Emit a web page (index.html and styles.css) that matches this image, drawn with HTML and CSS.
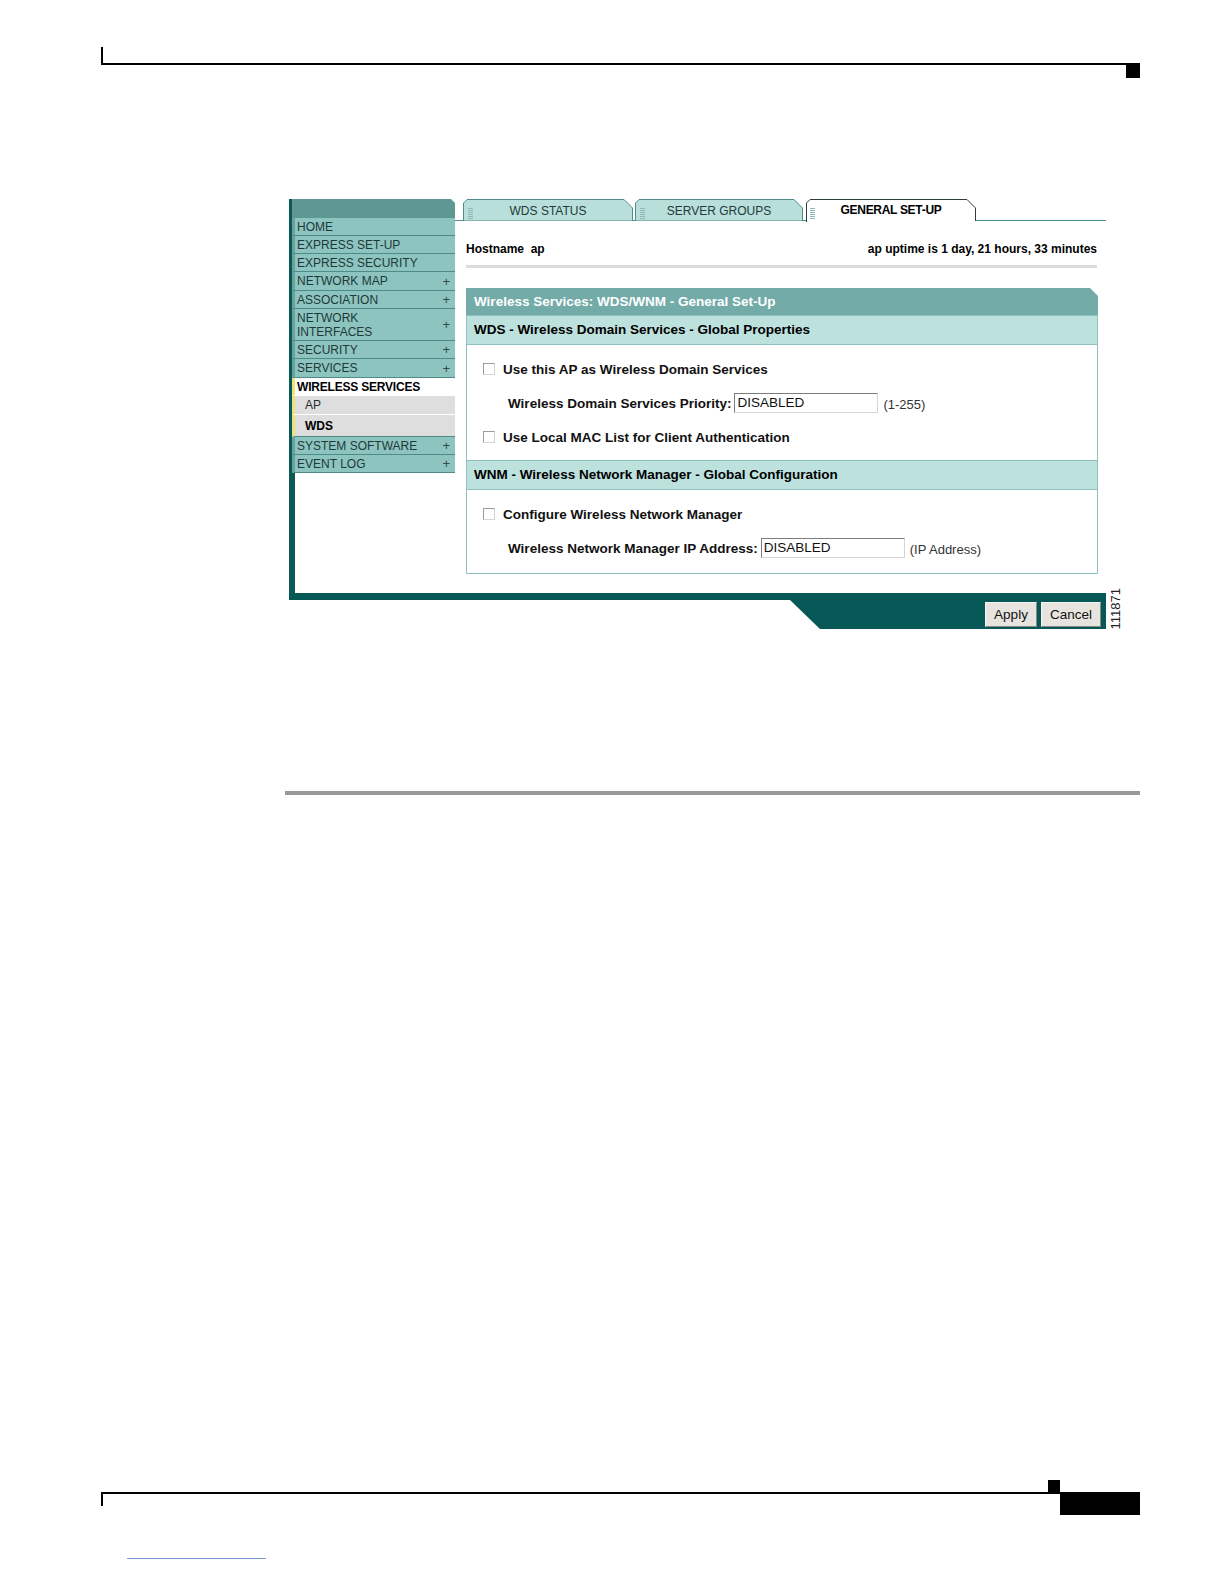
FILE: index.html
```html
<!DOCTYPE html>
<html>
<head>
<meta charset="utf-8">
<link rel="stylesheet" href="styles.css">
</head>
<body>
<div class="page">
  <div class="hdr"></div>
  <div class="hdr-sq"></div>

  <div class="figure">
    <div class="fig-body">
      <div class="fig-main">
        <nav class="nav">
          <div class="nav-head"></div>
          <div class="nav-item">HOME</div>
          <div class="nav-item">EXPRESS SET-UP</div>
          <div class="nav-item">EXPRESS SECURITY</div>
          <div class="nav-item tall"><span>NETWORK MAP</span><span class="plus">+</span></div>
          <div class="nav-item"><span>ASSOCIATION</span><span class="plus">+</span></div>
          <div class="nav-item two"><span>NETWORK<br>INTERFACES</span><span class="plus">+</span></div>
          <div class="nav-item"><span>SECURITY</span><span class="plus">+</span></div>
          <div class="nav-item tall"><span>SERVICES</span><span class="plus">+</span></div>
          <div class="nav-item active">WIRELESS SERVICES</div>
          <div class="nav-item sub">AP</div>
          <div class="nav-item sub cur">WDS</div>
          <div class="nav-item"><span>SYSTEM SOFTWARE</span><span class="plus">+</span></div>
          <div class="nav-item"><span>EVENT LOG</span><span class="plus">+</span></div>
          <div class="nav-fill"></div>
        </nav>

        <div class="content">
          <div class="tabs">
            <div class="tab t1">
              <svg class="tab-bg" width="170" height="22" viewBox="0 0 170 22">
                <polygon points="0.5,22 0.5,4 4,0.5 161,0.5 169.5,9 169.5,22" fill="#b9dfdb" stroke="#4f8d88"/>
                <g fill="#8fb8b4"><rect x="5" y="9" width="5" height="1"/><rect x="5" y="11" width="5" height="1"/><rect x="5" y="13" width="5" height="1"/><rect x="5" y="15" width="5" height="1"/><rect x="5" y="17" width="5" height="1"/><rect x="5" y="19" width="5" height="1"/></g>
              </svg>
              <span class="tab-txt">WDS STATUS</span>
            </div>
            <div class="tab t2">
              <svg class="tab-bg" width="168" height="22" viewBox="0 0 168 22">
                <polygon points="0.5,22 0.5,4 4,0.5 159,0.5 167.5,9 167.5,22" fill="#b9dfdb" stroke="#4f8d88"/>
                <g fill="#8fb8b4"><rect x="5" y="9" width="5" height="1"/><rect x="5" y="11" width="5" height="1"/><rect x="5" y="13" width="5" height="1"/><rect x="5" y="15" width="5" height="1"/><rect x="5" y="17" width="5" height="1"/><rect x="5" y="19" width="5" height="1"/></g>
              </svg>
              <span class="tab-txt">SERVER GROUPS</span>
            </div>
            <div class="tab t3">
              <svg class="tab-bg" width="170" height="23" viewBox="0 0 170 23">
                <polygon points="0.5,23 0.5,4 4,0.5 161,0.5 169.5,9 169.5,23" fill="#ffffff" stroke="none"/>
                <polyline points="0.5,23 0.5,4 4,0.5 161,0.5 169.5,9 169.5,22" fill="none" stroke="#2e3e3c"/>
                <g fill="#8fb8b4"><rect x="4" y="9" width="5" height="1"/><rect x="4" y="11" width="5" height="1"/><rect x="4" y="13" width="5" height="1"/><rect x="4" y="15" width="5" height="1"/><rect x="4" y="17" width="5" height="1"/><rect x="4" y="19" width="5" height="1"/></g>
              </svg>
              <span class="tab-txt bold">GENERAL SET-UP</span>
            </div>
          </div>

          <div class="host">
            <span>Hostname&nbsp; ap</span>
            <span>ap uptime is 1 day, 21 hours, 33 minutes</span>
          </div>

          <div class="panel">
            <div class="panel-title">Wireless Services: WDS/WNM - General Set-Up</div>
            <div class="sec-head">WDS - Wireless Domain Services - Global Properties</div>
            <div class="sec-body b1">
              <div class="row"><span class="cb"></span><span class="lbl">Use this AP as Wireless Domain Services</span></div>
              <div class="row field"><span class="lbl">Wireless Domain Services Priority:</span><span class="inp">DISABLED</span><span class="hint">(1-255)</span></div>
              <div class="row"><span class="cb"></span><span class="lbl">Use Local MAC List for Client Authentication</span></div>
            </div>
            <div class="sec-head">WNM - Wireless Network Manager - Global Configuration</div>
            <div class="sec-body b2">
              <div class="row"><span class="cb"></span><span class="lbl">Configure Wireless Network Manager</span></div>
              <div class="row field"><span class="lbl">Wireless Network Manager IP Address:</span><span class="inp">DISABLED</span><span class="hint">(IP Address)</span></div>
            </div>
          </div>
        </div>
      </div>
      <div class="fig-bar"></div>
      <div class="slab">
        <span class="btn">Apply</span>
        <span class="btn">Cancel</span>
      </div>
    </div>
    <div class="fig-id">111871</div>
  </div>

  <div class="rule"></div>

  <div class="ft-sq"></div>
  <div class="ft">
    <div class="ft-line"></div>
    <div class="ft-block"></div>
  </div>
  <div class="link-line"></div>
</div>
</body>
</html>
```

FILE: styles.css
```css
html, body {
  margin: 0;
  padding: 0;
  background: #ffffff;
}

.page {
  width: 1224px;
  height: 1584px;
  font-family: "Liberation Sans", Arial, sans-serif;
  color: #000;
  overflow: hidden;
}

/* page header */
.hdr {
  margin: 47px 0 0 101px;
  width: 1037px;
  height: 16px;
  border-left: 2px solid #000;
  border-bottom: 2px solid #000;
}
.hdr-sq {
  margin-left: 1126px;
  width: 14px;
  height: 13px;
  background: #000;
}

/* figure */
.figure {
  margin: 121px 0 0 289px;
  display: flex;
  align-items: flex-end;
}
.fig-body {
  width: 817px;
}
.fig-main {
  display: flex;
  height: 394px;
}

/* left navigation */
.nav {
  width: 163px;
  display: flex;
  flex-direction: column;
  border-left: 3px solid #0b5957;
}
.nav-head {
  height: 19px;
  background: #5e9893;
  clip-path: polygon(0 0, calc(100% - 4px) 0, 100% 4px, 100% 100%, 0 100%);
}
.nav-item {
  display: flex;
  justify-content: space-between;
  align-items: center;
  height: 17px;
  padding: 0 5px 0 2px;
  background: #8dc4bf;
  border-left: 3px solid #67a49f;
  border-bottom: 1px solid #4d8b86;
  font-size: 12px;
  color: #1d3a39;
  white-space: nowrap;
}
.nav-item.tall {
  height: 18px;
}
.nav-item.two {
  height: 31px;
  line-height: 14px;
}
.nav-item .plus {
  font-size: 13px;
  color: #2d4e4c;
}
.nav-item.active {
  background: #ffffff;
  color: #000;
  font-weight: bold;
  letter-spacing: -0.2px;
  border-left-color: #ede37c;
  border-bottom-color: #ffffff;
}
.nav-item.sub {
  padding-left: 10px;
  background: #dedede;
  color: #1e2e2e;
  border-left-color: #ede37c;
  border-bottom-color: #ffffff;
  height: 18px;
}
.nav-item.sub.cur {
  font-weight: bold;
  color: #000;
  height: 21px;
  border-bottom: 1px solid #4d8b86;
}
.nav-fill {
  flex: 1;
  background: #fff;
  border-left: 3px solid #0b5957;
}

/* content */
.content {
  flex: 1;
  display: flex;
  flex-direction: column;
}
.tabs {
  display: flex;
  align-items: flex-end;
  gap: 2px;
  height: 21px;
  padding-left: 8px;
  border-bottom: 1px solid #4f8d88;
}
.tab {
  position: relative;
  height: 22px;
  margin-bottom: -1px;
  display: flex;
  align-items: center;
  justify-content: center;
}
.t1 { width: 170px; }
.t2 { width: 168px; }
.t3 { width: 170px; height: 23px; margin-left: 1px; margin-bottom: -2px; align-items: flex-start; }
.tab-bg {
  position: absolute;
  left: 0;
  top: 0;
}
.tab-txt {
  position: relative;
  font-size: 12px;
  color: #223a39;
  padding-top: 1px;
}
.t3 .tab-txt { padding-top: 4px; }
.tab-txt.bold {
  font-weight: bold;
  color: #000;
  letter-spacing: -0.3px;
}

.host {
  display: flex;
  justify-content: space-between;
  margin: 21px 9px 0 11px;
  padding-bottom: 9px;
  border-bottom: 3px solid #dcdcdc;
  font-size: 12px;
  line-height: 14px;
  font-weight: bold;
}

.panel {
  margin: 20px 8px 0 11px;
  border-bottom: 1px solid #8fc2be;
}
.panel-title {
  height: 27px;
  line-height: 27px;
  padding-left: 8px;
  background: #72aba7;
  color: #fff;
  font-size: 13.5px;
  font-weight: bold;
  clip-path: polygon(0 0, calc(100% - 8px) 0, 100% 8px, 100% 100%, 0 100%);
}
.sec-head {
  height: 28px;
  line-height: 28px;
  padding-left: 7px;
  background: #bde2de;
  border: 1px solid #8fc2be;
  font-size: 13.5px;
  font-weight: bold;
}
.sec-body {
  display: flex;
  flex-direction: column;
  gap: 16px;
  padding: 16px 16px;
  border-left: 1px solid #8fc2be;
  border-right: 1px solid #8fc2be;
}
.sec-body.b1 { padding-bottom: 15px; }
.sec-body.b2 { padding-top: 16px; padding-bottom: 15px; }
.row {
  display: flex;
  align-items: center;
  height: 16px;
  font-size: 13.5px;
}
.row.field {
  height: 20px;
  padding-left: 25px;
}
.cb {
  width: 10px;
  height: 10px;
  border: 1px solid #9c9c9c;
  border-right-color: #d4d4d4;
  border-bottom-color: #d4d4d4;
  background: #fff;
  margin-right: 8px;
}
.lbl {
  font-weight: bold;
  color: #111;
}
.inp {
  margin-left: 3px;
  width: 140px;
  height: 18px;
  line-height: 18px;
  padding-left: 2px;
  border: 1px solid #d6d6d6;
  border-top-color: #7c7c7c;
  border-left-color: #7c7c7c;
  font-size: 13.5px;
  color: #111;
}
.hint {
  margin-left: 5px;
  font-size: 13px;
  color: #333;
  padding-top: 3px;
}

/* bottom bar */
.fig-bar {
  height: 7px;
  background: #065856;
}
.slab {
  height: 29px;
  margin-left: 501px;
  background: #065856;
  clip-path: polygon(0 0, 100% 0, 100% 100%, 30px 100%);
  display: flex;
  justify-content: flex-end;
  align-items: center;
  gap: 4px;
  padding-right: 5px;
}
.btn {
  display: flex;
  align-items: center;
  justify-content: center;
  height: 23px;
  padding: 0 8px;
  background: #e7e4df;
  border: 1px solid #f6f5f2;
  border-right-color: #8a8884;
  border-bottom-color: #8a8884;
  font-size: 13.5px;
  color: #111;
}
.btn:first-child { width: 34px; }
.btn:last-child { width: 42px; }

.fig-id {
  writing-mode: vertical-rl;
  transform: rotate(180deg);
  margin-left: 4px;
  font-size: 13px;
  line-height: 12px;
  color: #222;
}

.rule {
  margin: 162px 0 0 285px;
  width: 855px;
  height: 4px;
  background: #999;
}

/* page footer */
.ft-sq {
  margin: 685px 0 0 1048px;
  width: 12px;
  height: 12px;
  background: #000;
}
.ft {
  display: flex;
  margin-left: 101px;
}
.ft-line {
  width: 957px;
  height: 12px;
  border-top: 2px solid #000;
  border-left: 2px solid #000;
}
.ft-block {
  width: 80px;
  height: 23px;
  background: #000;
}
.link-line {
  margin: 43px 0 0 127px;
  width: 139px;
  height: 1px;
  background: #7c97d6;
}
```
